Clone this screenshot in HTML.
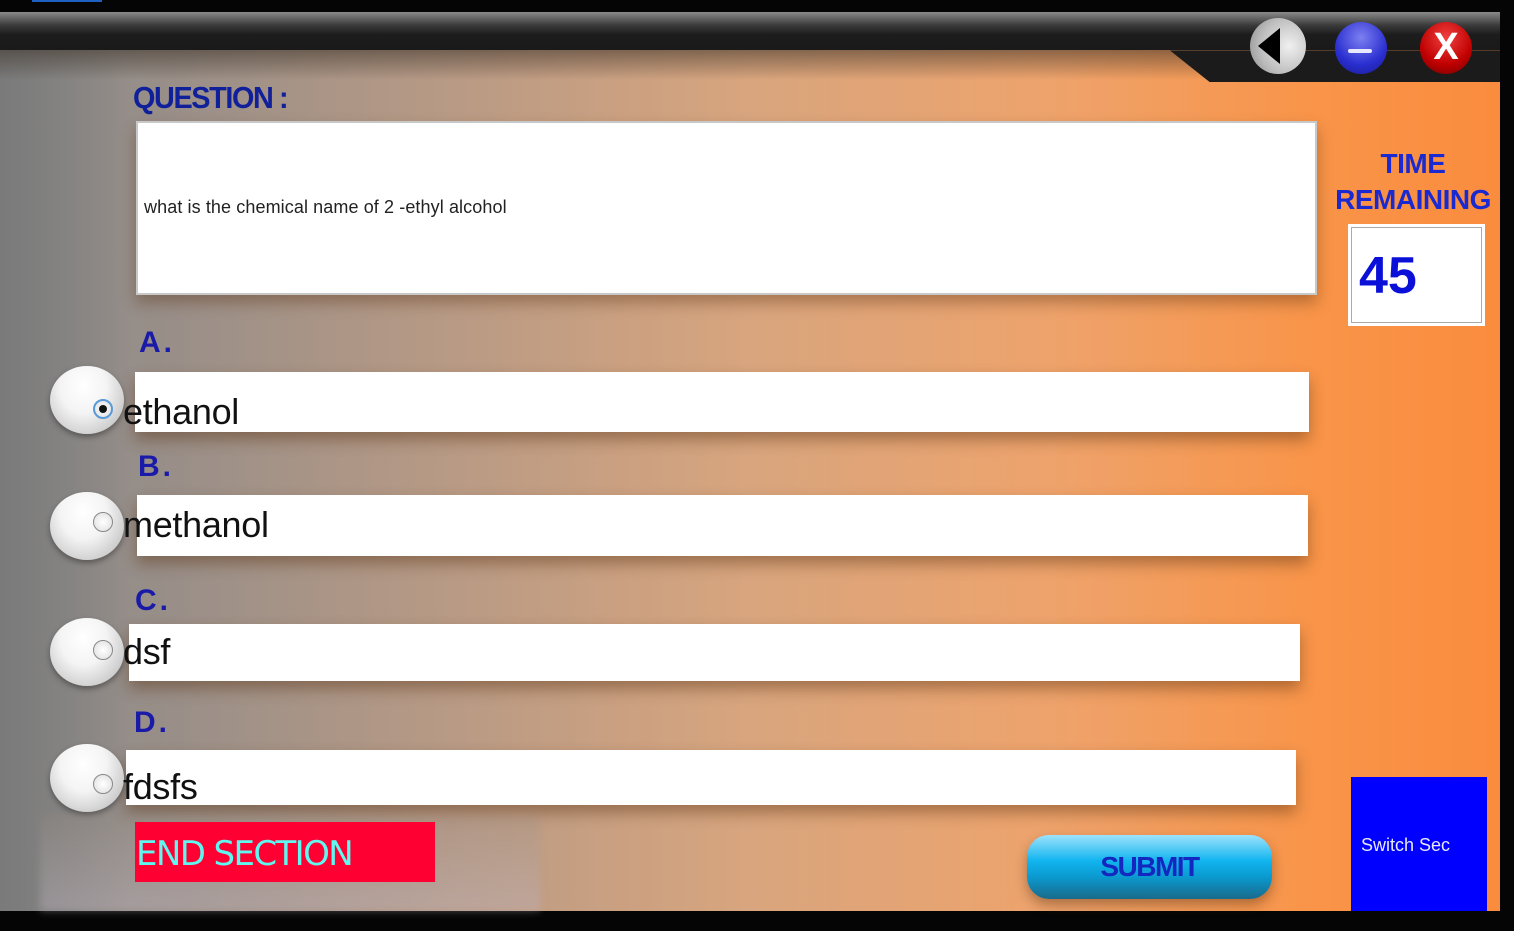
<!DOCTYPE html>
<html><head><style>
*{margin:0;padding:0;box-sizing:border-box}
body{width:1514px;height:931px;overflow:hidden;background:#050505;position:relative;font-family:"Liberation Sans",sans-serif}
.bg{position:absolute;left:0;top:12px;width:1500px;height:899px;background:linear-gradient(90deg,#8a8a8a 0%,#9a8f88 12%,#b89a85 30%,#d8a57e 50%,#eea36c 70%,#f99448 88%,#fa8c3e 100%)}
.shadeL{position:absolute;left:0;top:12px;width:130px;height:899px;background:linear-gradient(90deg,#7a7a7a,rgba(138,138,138,0))}
.topbar{position:absolute;left:0;top:12px;width:1500px;height:38px;background:linear-gradient(180deg,#8a8a8a 0%,#3a3a3a 35%,#1c1c1c 60%,#1a1a1a 100%)}
.topshadow{position:absolute;left:0;top:50px;width:1500px;height:30px;background:linear-gradient(180deg,rgba(60,50,40,.55),rgba(60,50,40,0))}
.notch{position:absolute;left:1170px;top:12px;width:330px;height:70px;background:#1b1b1b;clip-path:polygon(0 55%,100% 55%,100% 100%,12% 100%,0 55%)}
.b{position:absolute;border-radius:50%}
.lbl{position:absolute;color:#1a1aa8;font-weight:bold;font-size:30px;letter-spacing:3px}
.opt{position:absolute;background:#fff;box-shadow:0 8px 14px rgba(90,50,20,.45)}
.ball{position:absolute;width:74px;height:68px;border-radius:50%;background:radial-gradient(ellipse at 45% 30%,#fff 0%,#f4f4f4 40%,#c8c8c8 80%,#9a9a9a 100%);box-shadow:0 3px 6px rgba(0,0,0,.35)}
.rad{position:absolute;width:20px;height:20px;border-radius:50%;border:1px solid #888;background:radial-gradient(#fff,#ddd)}
.txt{position:absolute;font-size:36px;color:#111;white-space:nowrap;letter-spacing:-0.3px}
</style></head><body>
<div class="bg"></div>
<div class="shadeL"></div>
<div class="topbar"></div>
<div class="topshadow"></div>
<div class="notch"></div>
<div style="position:absolute;left:32px;top:0;width:70px;height:2px;background:#2060c0"></div>
<div class="b" style="left:1250px;top:18px;width:56px;height:56px;background:radial-gradient(circle at 70% 50%,#f0f0f0,#bdbdbd 60%,#8a8a8a)"></div>
<svg style="position:absolute;left:1250px;top:18px" width="56" height="56"><path d="M8 28 L30 10 L30 46 Z" fill="#000"/></svg>
<div class="b" style="left:1335px;top:22px;width:52px;height:52px;background:radial-gradient(circle at 50% 30%,#7d7ff0,#2a2fd0 60%,#1a1a90)"></div>
<div style="position:absolute;left:1348px;top:49px;width:24px;height:4px;background:#e8e8ff;border-radius:2px"></div>
<div class="b" style="left:1420px;top:22px;width:52px;height:52px;background:radial-gradient(circle at 50% 30%,#f04040,#c00000 60%,#700000)"></div>
<div style="position:absolute;left:1420px;top:22px;width:52px;height:52px;color:#fff;font-weight:bold;font-size:38px;text-align:center;line-height:50px">X</div>

<div style="position:absolute;left:133px;top:80px;color:#10209a;font-weight:bold;font-size:31px;letter-spacing:-1.5px;transform:scaleX(.93);transform-origin:left">QUESTION :</div>
<div style="position:absolute;left:136px;top:121px;width:1181px;height:174px;background:#fff;border:2px solid #c8c8c8;box-shadow:0 8px 14px rgba(90,50,20,.4)"></div>
<div style="position:absolute;left:144px;top:197px;font-size:18px;color:#222;letter-spacing:0.1px">what is the chemical name of 2 -ethyl alcohol</div>

<div style="position:absolute;left:1328px;top:146px;width:170px;text-align:center;color:#1a2ad0;font-weight:bold;font-size:28px;line-height:36px;letter-spacing:-0.5px">TIME<br>REMAINING</div>
<div style="position:absolute;left:1348px;top:224px;width:137px;height:102px;background:#fff;border:3px solid #fff;outline:1px solid #aaa;outline-offset:-4px"></div>
<div style="position:absolute;left:1359px;top:246px;color:#0a10d8;font-weight:bold;font-size:52px">45</div>

<div class="lbl" style="left:139px;top:326px">A.</div>
<div class="opt" style="left:135px;top:372px;width:1174px;height:60px"></div>
<div class="ball" style="left:50px;top:366px"></div>
<div class="rad" style="left:93px;top:399px;border:2px solid #5a9ad8"></div>
<div style="position:absolute;left:99px;top:405px;width:8px;height:8px;border-radius:50%;background:#111"></div>
<div class="txt" style="left:123px;top:391px">ethanol</div>

<div class="lbl" style="left:138px;top:450px">B.</div>
<div class="opt" style="left:137px;top:495px;width:1171px;height:61px"></div>
<div class="ball" style="left:50px;top:492px"></div>
<div class="rad" style="left:93px;top:512px"></div>
<div class="txt" style="left:123px;top:504px">methanol</div>

<div class="lbl" style="left:135px;top:584px">C.</div>
<div class="opt" style="left:129px;top:624px;width:1171px;height:57px"></div>
<div class="ball" style="left:50px;top:618px"></div>
<div class="rad" style="left:93px;top:640px"></div>
<div class="txt" style="left:123px;top:631px">dsf</div>

<div class="lbl" style="left:134px;top:706px">D.</div>
<div class="opt" style="left:126px;top:750px;width:1170px;height:55px"></div>
<div class="ball" style="left:50px;top:744px"></div>
<div class="rad" style="left:93px;top:774px"></div>
<div class="txt" style="left:123px;top:766px">fdsfs</div>

<div style="position:absolute;left:40px;top:815px;width:500px;height:96px;background:linear-gradient(180deg,rgba(150,140,130,.25),rgba(190,180,190,.4));filter:blur(4px)"></div>
<div style="position:absolute;left:135px;top:822px;width:300px;height:60px;background:#ff0033"></div>
<div style="position:absolute;left:136px;top:834px;color:#5ff8f0;font-family:'DejaVu Sans',sans-serif;font-size:34px;letter-spacing:-1.6px">END SECTION</div>

<div style="position:absolute;left:1027px;top:835px;width:245px;height:64px;border-radius:22px;background:linear-gradient(180deg,#9ee2fb 0%,#12b5f0 40%,#0a9ad0 65%,#1a6a8a 100%);box-shadow:0 6px 12px rgba(90,50,20,.45)"></div>
<div style="position:absolute;left:1027px;top:851px;width:245px;text-align:center;color:#1428c0;font-weight:bold;font-size:28px;letter-spacing:-1.5px">SUBMIT</div>

<div style="position:absolute;left:1351px;top:777px;width:136px;height:134px;background:#0000ff"></div>
<div style="position:absolute;left:1361px;top:835px;color:#e8e8ff;font-size:18px">Switch Sec</div>
</body></html>
